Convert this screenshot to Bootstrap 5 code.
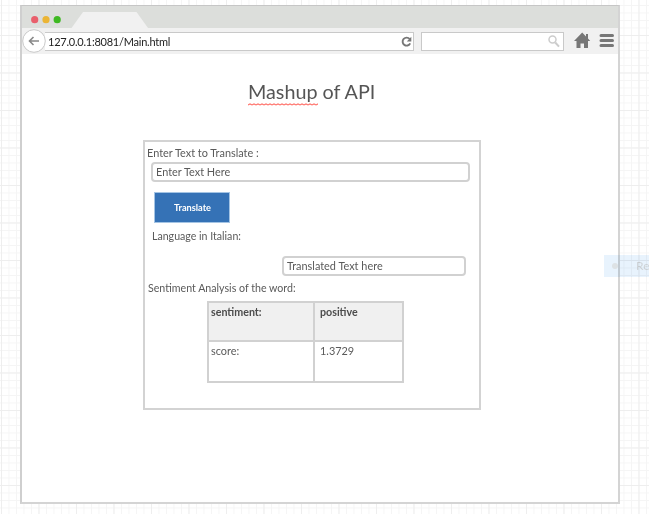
<!DOCTYPE html>
<html lang="en">
<head>
<meta charset="utf-8">
<meta name="viewport" content="width=device-width, initial-scale=1">
<title>Mashup of API</title>
<link href="https://cdn.jsdelivr.net/npm/bootstrap@5.3.0/dist/css/bootstrap.min.css" rel="stylesheet">
<style>
html{height:514px;overflow:hidden}
body{
  height:514px;overflow:hidden;color:#5a5a5a;
  font-family:Lato,"Open Sans",sans-serif;font-size:10.9px;line-height:14px;
  background-color:#fff;
  background-image:
    linear-gradient(90deg,#eee 1px,transparent 1px),
    linear-gradient(#eee 1px,transparent 1px),
    linear-gradient(90deg,#f5f5f5 1px,transparent 1px),
    linear-gradient(#f5f5f5 1px,transparent 1px);
  background-size:37.5px 37.5px,37.5px 37.5px,7.5px 7.5px,7.5px 7.5px;
  background-position:1px 35px,1px 35px,1px 5px,1px 5px;
}
.browser{width:600px;height:499px;margin:5px 0 0 20px;border:2px solid #d4d4d4;border-left-color:#cfcfcf;border-top:1px solid #c6c6c6}
.tabstrip{height:22px;background:#dcdedb;padding-left:9px}
.toolbar{height:26px;background:#f1f1f1}
.back{width:24px;height:24px;flex:none;z-index:1}
.address{height:19px;width:369px;margin-left:-1px;border:1px solid #c9c9c9;border-left:0;color:#222;padding:0 1px 0 3px}
.url{font-size:11px;letter-spacing:-.24px;padding-top:1px}
.search{height:19px;width:143px;margin-left:7px;border:1px solid #c9c9c9;padding-right:3px}
.heading{font-size:19.75px;line-height:24px;font-weight:400;color:#555;margin:26px 0 0 226px}
.misspelt{height:26px;margin-bottom:-2px;background:url("data:image/svg+xml,%3Csvg xmlns='http://www.w3.org/2000/svg' width='4' height='3'%3E%3Cpath d='M0 2L2 1L4 2' fill='none' stroke='%23ff7770' stroke-width='1.2'/%3E%3C/svg%3E") repeat-x left bottom}
.panel{width:338px;height:270px;margin:36px 0 0 121px;border:2px solid #d3d3d3}
.field{height:20px;border:2px solid #d1d1d1;border-radius:4px;padding:0 3px;line-height:16px;background:#fff}
.field-source{width:319px;margin:2px 0 0 6px}
.field-result{width:184px;margin:13px 0 0 137px}
.btn-go{width:76px;height:31px;margin:10px 0 0 9px;border:1px solid #a4c4e4;border-radius:0;background:#3572b6;color:#fff;font-size:9.2px;font-weight:700;padding:0 0 0 1px}
.label-source{margin:4px 0 0 2px}
.label-lang{margin:6px 0 0 7px;font-size:10.6px}
.label-sentiment{margin:5px 0 0 3px;font-size:10.65px}
.results{width:197px;height:82px;margin:6px 0 0 62px;border-collapse:collapse;table-layout:fixed}
.results th,.results td{border:2px solid #d1d1d1;vertical-align:top;padding:2px 2px 0;height:40px}
.results th{background:#f0f0f0;color:#4c4c4c;font-size:10.7px;height:39px}
.results tr>*:last-child{padding-left:5px}
.col-key{width:106px}
.hint{left:604px;top:255px;width:45px;height:22px;background:#e8f3fd;mix-blend-mode:multiply;color:#cfd4d8;padding-left:8px}
.hint-dot{width:6px;height:6px;background:#dde2e5}
.hint-text{margin-left:18px;font-size:12px}
</style>
</head>
<body>
<main class="browser bg-white">
  <div class="tabstrip d-flex align-items-end">
    <svg width="130" height="22" viewBox="31 6 130 22">
      <circle cx="34.700" cy="19.700" r="3.600" fill="#e95f6c"/><circle cx="46" cy="19.700" r="3.600" fill="#ebb535"/><circle cx="57.200" cy="19.700" r="3.600" fill="#3eb922"/>
      <path d="M71.500 28L83 12H136.500L148 28Z" fill="#f1f1f1"/>
    </svg>
  </div>
  <nav class="toolbar d-flex align-items-center">
    <svg class="back position-relative" viewBox="0 0 24 24"><circle cx="12" cy="12" r="11.300" fill="#fff" stroke="#c9c9c9"/><path d="M17 12H7.500M11.500 8L7.500 12L11.500 16" fill="none" stroke="#888" stroke-width="1.600"/></svg>
    <div class="address bg-white d-flex align-items-center justify-content-between">
      <span class="url">127.0.0.1:8081/Main.html</span>
      <svg width="11" height="11" viewBox="0 0 11 11"><path d="M9.200 7.400A4 4 0 1 1 8.700 3" fill="none" stroke="#777" stroke-width="1.900"/><path d="M10.300 .8V5.500H5.800Z" fill="#777"/></svg>
    </div>
    <div class="search bg-white d-flex align-items-center justify-content-end">
      <svg width="12" height="13" viewBox="0 0 12 13"><circle cx="4.500" cy="4.500" r="3.500" fill="none" stroke="#ccc" stroke-width="1.500"/><path d="M7.200 7.500L11 11.700" stroke="#ccc" stroke-width="2"/></svg>
    </div>
    <svg class="ms-2 flex-shrink-0" width="46" height="26" viewBox="572 28 46 26"><path d="M574 41L582.200 32.500L586 36.400V34H588V38.500L590.200 41H588V48H584V43.500H580.500V48H576.500V41Z" fill="#777"/><path d="M601 35.500H612.500M601 40.500H612.500M601 45.500H612.500" stroke="#777" stroke-width="3" stroke-linecap="round"/></svg>
  </nav>
  <h1 class="heading"><span class="misspelt d-inline-block">Mashup</span> of API</h1>
  <section class="panel">
    <div class="label-source">Enter Text to Translate :</div>
    <div class="field field-source">Enter Text Here</div>
    <button class="btn btn-go d-flex align-items-center justify-content-center" type="button">Translate</button>
    <div class="label-lang">Language in Italian:</div>
    <div class="field field-result">Translated Text here</div>
    <div class="label-sentiment">Sentiment Analysis of the word:</div>
    <table class="results">
      <colgroup><col class="col-key"><col></colgroup>
      <thead><tr><th>sentiment:</th><th>positive</th></tr></thead>
      <tbody><tr><td>score:</td><td>1.3729</td></tr></tbody>
    </table>
  </section>
</main>
<aside class="hint position-absolute d-flex align-items-center overflow-hidden"><span class="hint-dot rounded-circle flex-shrink-0"></span><span class="hint-text">Re</span></aside>
<script src="https://cdn.jsdelivr.net/npm/bootstrap@5.3.0/dist/js/bootstrap.bundle.min.js"></script>
</body>
</html>
